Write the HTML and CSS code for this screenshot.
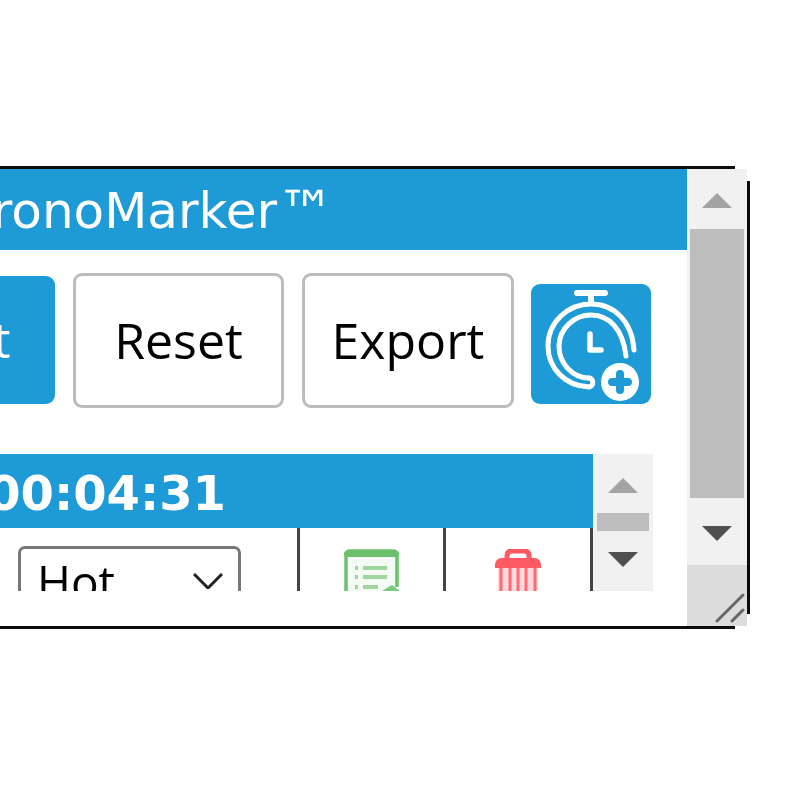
FILE: index.html
```html
<!DOCTYPE html>
<html lang="en">
<head>
<meta charset="utf-8">
<title>ChronoMarker</title>
<link rel="stylesheet" href="styles.css">
</head>
<body>
<div class="stage">
  <div class="window">
    <div class="main">
      <div class="title">ChronoMarker<span class="tm">™</span></div>
      <div class="actions">
        <button class="btn btn-primary">Start</button>
        <button class="btn">Reset</button>
        <button class="btn">Export</button>
        <div class="add-timer">
          <svg class="add-icon" viewBox="0 0 120 120">
            <g fill="none" stroke="#fff" stroke-linecap="round" stroke-linejoin="round">
              <path class="w6" d="M46 9H74M60 9V19"/>
              <path class="w4" d="M58 103C34 102 17 84 17 62C17 38 37 20 60 20C83 20 101 37 103 66"/>
              <path class="w4" d="M58 94C42 94 28 80 28 62C28 45 43 31 60 31C78 31 92 45 95 72"/>
              <path class="w4" d="M58 94C63 94 63 103 58 103"/>
              <path class="w5" d="M59 50V66H70"/>
            </g>
            <circle cx="89" cy="98" r="19" fill="#fff"/>
            <path class="plus" d="M89 90V106M81 98H97"/>
          </svg>
        </div>
      </div>
      <div class="panel-wrap">
        <div class="panel">
          <div class="rows">
            <div class="time">00:00:04:31</div>
            <div class="cells">
              <div class="cell cell-select">
                <div class="select">
                  <span>Hot</span>
                  <svg class="chevron" viewBox="0 0 30 16"><path d="M1 1L15 15L29 1"/></svg>
                </div>
              </div>
              <div class="cell cell-icon">
                <svg class="note-icon" viewBox="0 0 56 48">
                  <path class="note-frame" d="M2 48V6Q2 2 6 2H49Q53 2 53 6V38"/>
                  <path class="note-bar" d="M3 5H52"/>
                  <path class="note-lines" d="M11 19H14M19 19H43M11 28H14M19 28H43M11 38H14M19 38H34"/>
                  <path class="note-pen" d="M38 42L48 36L56 42H38Z"/>
                </svg>
              </div>
              <div class="cell cell-icon">
                <svg class="trash-icon" viewBox="0 0 48 48">
                  <path class="trash-handle" d="M13 11V7Q13 2 18 2H30Q35 2 35 7V11"/>
                  <path class="trash-lid" d="M1 17Q1 9 8 9H40Q47 9 47 17V19H1Z"/>
                  <path class="trash-body" d="M4 19H44V48H4Z"/>
                  <path class="trash-bars" d="M7 19V48M16 19V48M24 19V48M32 19V48M41 19V48"/>
                </svg>
              </div>
            </div>
          </div>
          <div class="scrollbar mini">
            <div class="arrow-btn mini-up"><span class="tri tri-up"></span></div>
            <div class="thumb mini-thumb"></div>
            <div class="arrow-btn mini-down"><span class="tri tri-down"></span></div>
          </div>
        </div>
      </div>
    </div>
    <div class="side">
      <div class="scrollbar big">
        <div class="arrow-btn big-up"><span class="tri tri-up"></span></div>
        <div class="thumb big-thumb"></div>
        <div class="arrow-btn big-down"><span class="tri tri-down"></span></div>
      </div>
      <div class="resize">
        <svg class="grip" viewBox="0 0 60 60"><path d="M30 56L56 30M45 56L56 45"/></svg>
      </div>
    </div>
    <span class="mask mask-top"></span>
    <span class="mask mask-bottom"></span>
  </div>
</div>
</body>
</html>
```
FILE: styles.css
```css
* { box-sizing: border-box; }
html, body { margin: 0; background: #fff; }
.stage {
  width: 799px;
  height: 799px;
  padding: 166px 49px 0 0;
  display: flex;
  justify-content: flex-end;
  align-items: flex-start;
  overflow: hidden;
}
.window {
  position: relative;
  flex: 0 0 1000px;
  height: 463px;
  display: flex;
  background: #fff;
  border: 3px solid #0b0b0b;
  border-radius: 14px;
  filter: blur(0.6px);
}
.main { flex: 1; min-width: 0; }
.title {
  height: 81px;
  padding-right: 350px;
  background: #1e9bd7;
  color: #fff;
  font: 50px/84px "DejaVu Sans", sans-serif;
  text-align: right;
  white-space: nowrap;
}
.tm { font-size: 58px; line-height: 0; vertical-align: -4px; letter-spacing: 2px; }
.actions {
  height: 204px;
  padding: 23px 36px 0 0;
  display: flex;
  justify-content: flex-end;
  align-items: flex-start;
}
.btn {
  width: 211px;
  height: 135px;
  margin-right: 18px;
  padding-bottom: 3px;
  background: #fff;
  border: 3px solid #bcbcbc;
  border-radius: 9px;
  color: #000;
  font: 50px "Open Sans", sans-serif;
}
.btn + .btn + .btn { width: 212px; margin-right: 17px; }
.btn-primary {
  width: 200px;
  height: 128px;
  margin-top: 3px;
  background: #1e9bd7;
  border: 0;
  color: #fff;
}
.add-timer {
  flex: 0 0 120px;
  height: 120px;
  margin-top: 11px;
  background: #1e9bd7;
  border-radius: 9px;
}
.add-icon { display: block; width: 120px; height: 120px; }
.w6 { stroke-width: 6; }
.w5 { stroke-width: 5.5; }
.w4 { stroke-width: 5; }
.plus { stroke: #1e9bd7; stroke-width: 8; stroke-linecap: round; fill: none; }

.panel-wrap { padding-right: 34px; display: flex; justify-content: flex-end; }
.panel { display: flex; height: 137px; width: 100%; overflow: hidden; }
.rows { flex: 1; min-width: 0; }
.time {
  height: 74px;
  padding-right: 367px;
  background: #1e9bd7;
  color: #fff;
  font: bold 48px/78px "DejaVu Sans", sans-serif;
  text-align: right;
  white-space: nowrap;
}
.cells { display: flex; justify-content: flex-end; height: 63px; }
.cell { border-right: 3px solid #444; height: 63px; }
.cell-select { flex: 1; display: flex; justify-content: flex-end; padding: 18px 56px 0 0; }
.select {
  flex: 0 0 223px;
  height: 70px;
  padding: 0 15px 0 16px;
  display: flex;
  justify-content: space-between;
  align-items: flex-start;
  border: 3px solid #777;
  border-radius: 7px;
  color: #000;
  font: 46px/64px "Open Sans", sans-serif;
}
.chevron { width: 30px; height: 16px; margin-top: 24px; fill: none; stroke: #222; stroke-width: 3; flex: none; }
.cell-icon { flex: 0 0 146px; display: flex; justify-content: center; padding-top: 21px; overflow: hidden; }
.cell-icon + .cell-icon { flex-basis: 147px; }
.note-icon { width: 56px; height: 48px; flex: none; }
.note-frame { fill: #f4faf4; stroke: #6cc06c; stroke-width: 3.5; }
.note-bar { stroke: #6cc06c; stroke-width: 6; stroke-linecap: round; }
.note-lines { stroke: #9fd59f; stroke-width: 4; }
.note-pen { fill: #7cc87c; }
.trash-icon { width: 48px; height: 48px; flex: none; }
.trash-handle { fill: none; stroke: #ff5a64; stroke-width: 5; }
.trash-lid { fill: #ff5a64; }
.trash-body { fill: #ffd9db; }
.trash-bars { stroke: #ff6a73; stroke-width: 3; }

.scrollbar { background: #f1f1f1; display: flex; flex-direction: column; align-items: center; }
.mini { flex: 0 0 60px; height: 137px; }
.side { flex: 0 0 60px; display: flex; flex-direction: column; }
.big { height: 396px; }
.arrow-btn { display: flex; justify-content: center; width: 100%; }
.thumb { background: #bdbdbd; }
.tri { width: 0; height: 0; border-left: 15px solid transparent; border-right: 15px solid transparent; }
.tri-up { border-bottom: 15px solid #a3a3a3; }
.tri-down { border-top: 15px solid #505050; }
.big-up { height: 60px; padding-top: 24px; }
.big-thumb { width: 54px; height: 269px; }
.big-down { height: 67px; padding-top: 28px; }
.mini-up { height: 59px; padding-top: 24px; }
.mini-thumb { width: 52px; height: 18px; }
.mini-down { height: 60px; padding-top: 21px; }
.resize { flex: 1; background: #dcdcdc; }
.grip { position: relative; z-index: 1; display: block; width: 60px; height: 60px; fill: none; stroke: #666; stroke-width: 3; stroke-linecap: round; }
.mask { position: absolute; right: -3px; width: 15px; height: 15px; border-right: 3px solid #fff; }
.mask-top { top: -3px; background: #f1f1f1; border-top: 3px solid #fff; }
.mask-bottom { bottom: -3px; background: #dcdcdc; border-bottom: 3px solid #fff; }
```
